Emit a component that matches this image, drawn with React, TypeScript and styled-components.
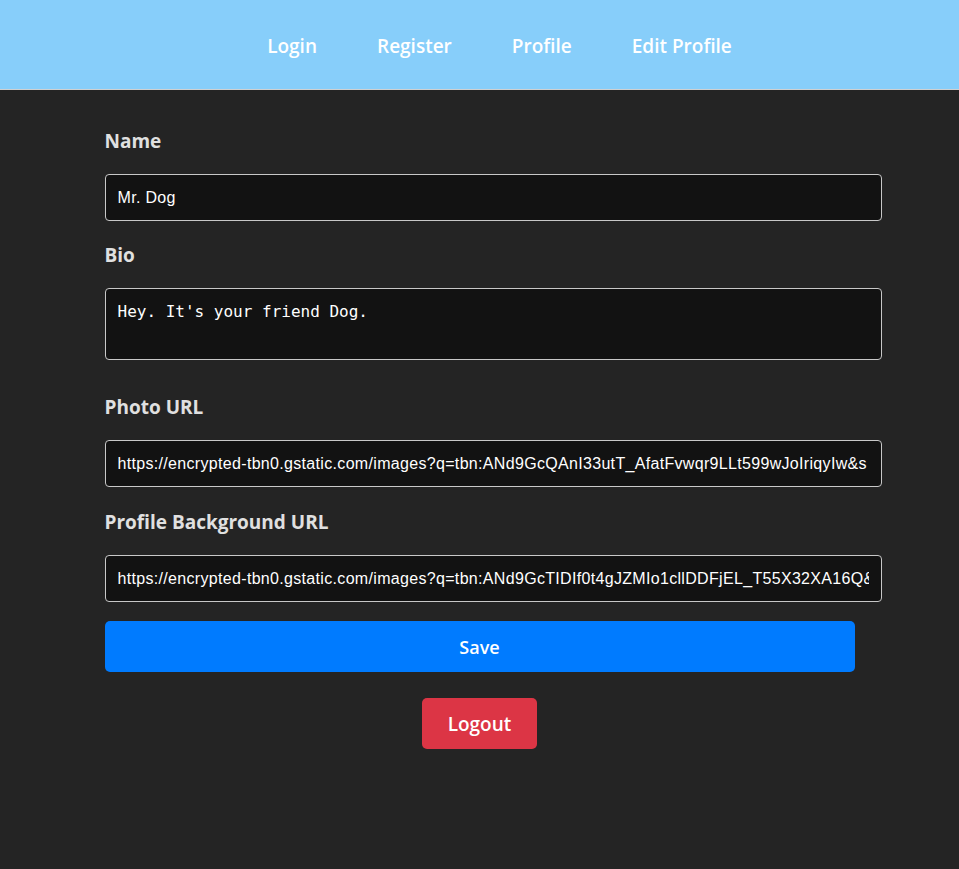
import React from "react";
import styled, { createGlobalStyle } from "styled-components";

const Global = createGlobalStyle`
  html, body { margin: 0; padding: 0; background: #242424; }
  body { font-family: "Open Sans", "Noto Sans", sans-serif; min-height: 869px; }
  * { box-sizing: border-box; }
`;

const Header = styled.header`
  height: 90px;
  background: #87cefa;
  border-bottom: 1px solid #d0d0d0;
  display: flex;
  align-items: center;
  justify-content: center;
`;

const NavList = styled.ul`
  display: flex;
  gap: 60px;
  list-style: none;
  margin: 0;
  padding: 2px 0 0 40px;
`;

const NavItem = styled.li`
  display: block;
`;

const NavLink = styled.a`
  color: #ffffff;
  font-size: 19px;
  font-weight: 600;
  text-decoration: none;
  cursor: pointer;
`;

const Main = styled.main`
  width: 750px;
  margin: 0 auto;
  padding-top: 39px;
  display: flex;
  flex-direction: column;
`;

const Label = styled.label`
  display: block;
  color: #e0e0e0;
  font-size: 19px;
  font-weight: 700;
  line-height: 24px;
  margin-bottom: 21px;
`;

const TextInput = styled.input<{ $gap: number }>`
  display: block;
  width: 777px;
  height: 47px;
  padding: 0 12px 0 12px;
  margin: 0 0 ${(p) => p.$gap}px;
  background: #121212;
  color: #ffffff;
  border: 1px solid #c8c8c8;
  border-radius: 4px;
  font-family: "Liberation Sans", Arial, sans-serif;
  font-size: 16px;
  letter-spacing: 0.32px;
  outline: none;
`;

const TextArea = styled.textarea`
  display: block;
  width: 777px;
  height: 72px;
  padding: 12px 12px;
  margin: 0 0 35px;
  background: #121212;
  color: #ffffff;
  border: 1px solid #c8c8c8;
  border-radius: 4px;
  font-family: "DejaVu Sans Mono", "Liberation Mono", monospace;
  font-size: 16px;
  line-height: 22px;
  resize: none;
  outline: none;
`;

const Button = styled.button<{ $variant: "primary" | "danger"; $full?: boolean }>`
  height: 51px;
  border: none;
  border-radius: 5px;
  color: #ffffff;
  font-family: "Open Sans", "Noto Sans", sans-serif;
  font-size: ${(p) => (p.$full ? "18px" : "19px")};
  font-weight: 600;
  cursor: pointer;
  background: ${(p) => (p.$variant === "primary" ? "#007bff" : "#dc3545")};
  width: ${(p) => (p.$full ? "100%" : "115px")};
  align-self: center;
`;

const Actions = styled.div`
  display: flex;
  flex-direction: column;
  gap: 26px;
`;

export default function App() {
  return (
    <>
      <Global />
      <Header>
        <NavList>
          <NavItem><NavLink>Login</NavLink></NavItem>
          <NavItem><NavLink>Register</NavLink></NavItem>
          <NavItem><NavLink>Profile</NavLink></NavItem>
          <NavItem><NavLink>Edit Profile</NavLink></NavItem>
        </NavList>
      </Header>
      <Main>
        <Label>Name</Label>
        <TextInput $gap={22} defaultValue="Mr. Dog" />
        <Label>Bio</Label>
        <TextArea defaultValue="Hey. It's your friend Dog." />
        <Label>Photo URL</Label>
        <TextInput
          $gap={23}
          defaultValue="https://encrypted-tbn0.gstatic.com/images?q=tbn:ANd9GcQAnI33utT_AfatFvwqr9LLt599wJoIriqyIw&s"
        />
        <Label>Profile Background URL</Label>
        <TextInput
          $gap={19}
          defaultValue="https://encrypted-tbn0.gstatic.com/images?q=tbn:ANd9GcTIDIf0t4gJZMIo1cllDDFjEL_T55X32XA16Q&usqp=CAU"
        />
        <Actions>
          <Button $variant="primary" $full>Save</Button>
          <Button $variant="danger">Logout</Button>
        </Actions>
      </Main>
    </>
  );
}
